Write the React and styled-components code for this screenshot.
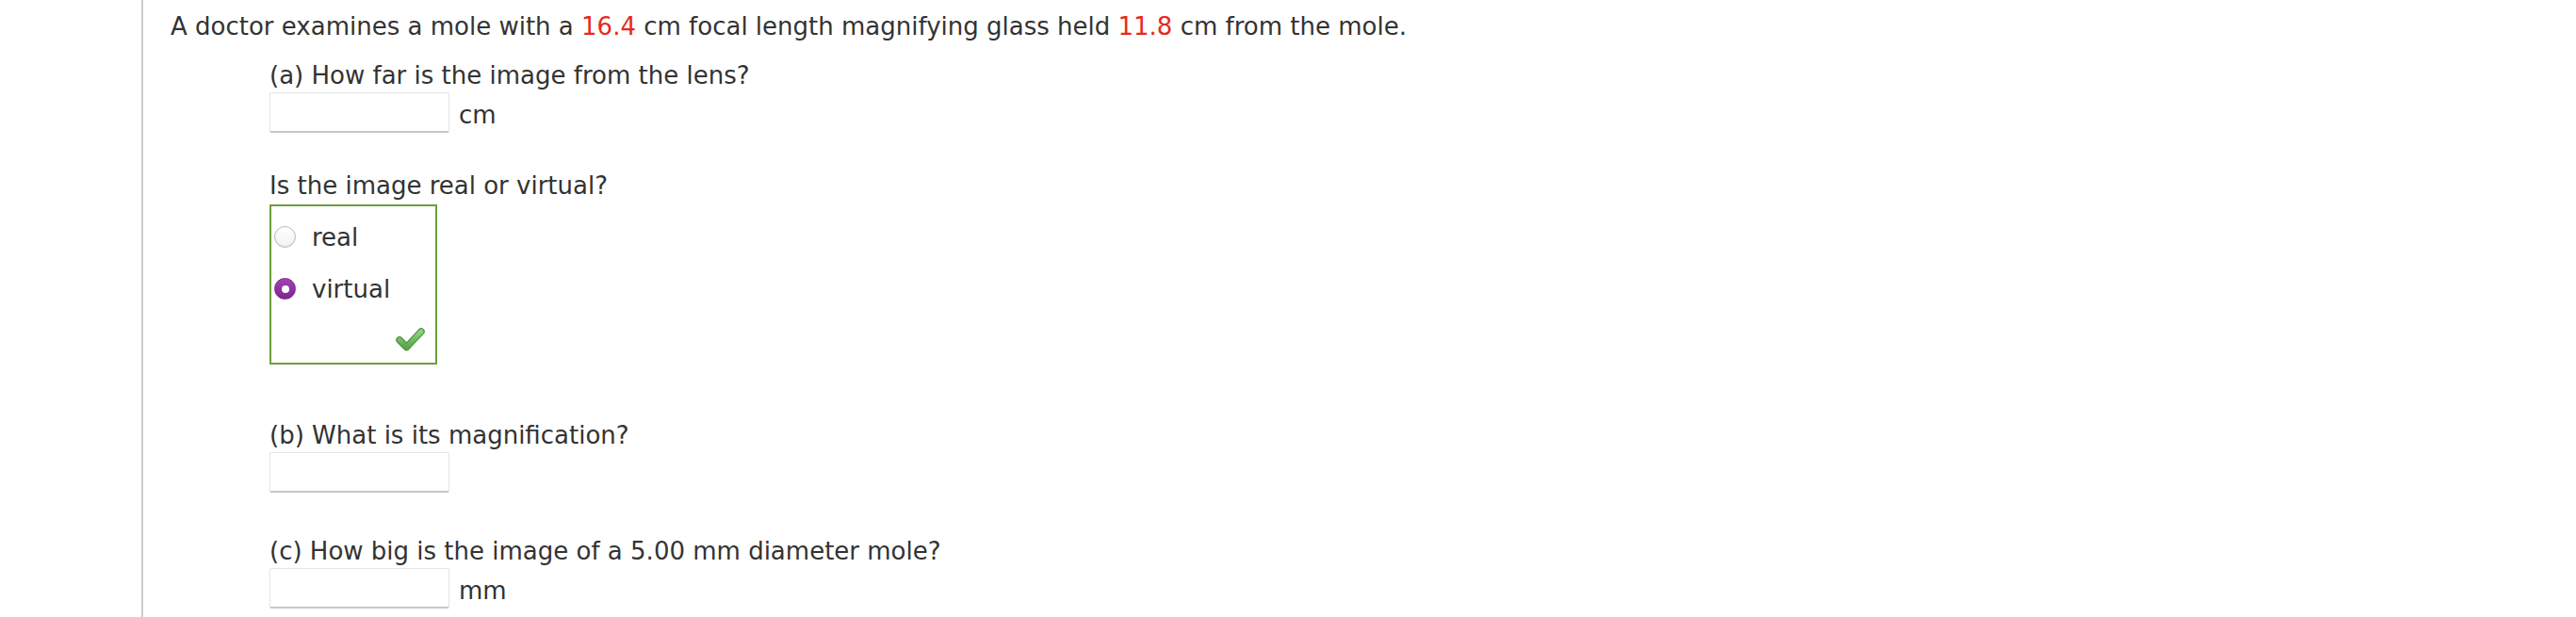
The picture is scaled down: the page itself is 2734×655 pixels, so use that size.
import React, { useState } from "react";
import styled, { createGlobalStyle } from "styled-components";

const GlobalStyle = createGlobalStyle`
  html, body {
    margin: 0;
    padding: 0;
    background: #ffffff;
  }
  body {
    font-family: "DejaVu Sans", Verdana, sans-serif;
    color: #333333;
  }
`;

const Page = styled.div`
  margin-left: 150px;
  min-height: 100vh;
  border-left: 2px solid #cccccc;
  padding: 10px 0 0 29px;
  box-sizing: border-box;
`;

const Question = styled.div`
  font-size: 26px;
  line-height: 36px;
`;

const Red = styled.span`
  color: #e8281e;
`;

const Part = styled.div`
  margin-left: 105px;
  margin-top: ${(p) => p.$top || 0}px;
`;

const Label = styled.div`
  font-size: 26px;
  line-height: 36px;
  white-space: nowrap;
`;

const AnswerRow = styled.div`
  display: flex;
  align-items: center;
  gap: 10px;
  font-size: 26px;
`;

const Field = styled.input`
  width: 191px;
  height: 43px;
  box-sizing: border-box;
  margin: 0;
  border: 1px solid #e4e4e4;
  border-bottom: 2px solid #c6c6c6;
  border-radius: 2px;
  background: #ffffff;
  font: inherit;
  padding: 0 8px;
  outline: none;
`;

const Unit = styled.span`
  font-size: 26px;
  line-height: 36px;
  padding-top: 4px;
`;

const ChoiceBox = styled.div`
  width: 178px;
  height: 170px;
  box-sizing: border-box;
  border: 2px solid #6b9f3f;
  padding-top: 5px;
  display: flex;
  flex-direction: column;
  margin-top: 2px;
`;

const Choice = styled.label`
  display: flex;
  align-items: center;
  height: 55px;
  padding-left: 3px;
  font-size: 26px;
  cursor: pointer;
`;

const Dot = styled.span`
  width: 23px;
  height: 23px;
  border-radius: 50%;
  box-sizing: border-box;
  flex-shrink: 0;
  margin-right: 17px;
  position: relative;
  border: 1px solid ${(p) => (p.$on ? "#7f2590" : "#b8b8b8")};
  box-shadow: ${(p) => (p.$on ? "none" : "inset 0 -1px 2px rgba(0,0,0,0.08)")};
  background: ${(p) =>
    p.$on
      ? "linear-gradient(#a244b3, #7e2490)"
      : "linear-gradient(#ffffff, #f3f3f3)"};

  &::after {
    content: "";
    display: ${(p) => (p.$on ? "block" : "none")};
    position: absolute;
    left: 50%;
    top: 50%;
    width: 8px;
    height: 8px;
    margin: -4px 0 0 -4px;
    border-radius: 50%;
    background: #ffffff;
  }
`;

const ChoiceText = styled.span`
  line-height: 36px;
`;

const Footer = styled.div`
  flex: 1;
  display: flex;
  justify-content: flex-end;
  align-items: center;
  padding-right: 11px;
`;

const Check = () => (
  <svg width="31" height="26" viewBox="0 0 31 26">
    <defs>
      <linearGradient id="chk" x1="0" y1="0" x2="0" y2="1">
        <stop offset="0" stopColor="#8fd07e" />
        <stop offset="1" stopColor="#5aa84b" />
      </linearGradient>
    </defs>
    <path
      d="M4 14 L11.5 21.5 L27 5"
      fill="none"
      stroke="#4f9440"
      strokeWidth="7.5"
      strokeLinecap="round"
      strokeLinejoin="round"
    />
    <path
      d="M4 14 L11.5 21.5 L27 5"
      fill="none"
      stroke="url(#chk)"
      strokeWidth="5"
      strokeLinecap="round"
      strokeLinejoin="round"
    />
  </svg>
);

const Answer = ({ unit }) => (
  <AnswerRow>
    <Field type="text" />
    {unit && <Unit>{unit}</Unit>}
  </AnswerRow>
);

export default function App() {
  const [pick, setPick] = useState("virtual");

  return (
    <Page>
      <GlobalStyle />
      <Question>
        A doctor examines a mole with a <Red>16.4</Red> cm focal length
        magnifying glass held <Red>11.8</Red> cm from the mole.
      </Question>

      <Part $top={16}>
        <Label>(a) How far is the image from the lens?</Label>
        <Answer unit="cm" />
      </Part>

      <Part $top={38}>
        <Label>Is the image real or virtual?</Label>
        <ChoiceBox>
          {["real", "virtual"].map((opt) => (
            <Choice key={opt} onClick={() => setPick(opt)}>
              <Dot $on={pick === opt} />
              <ChoiceText>{opt}</ChoiceText>
            </Choice>
          ))}
          <Footer>
            <Check />
          </Footer>
        </ChoiceBox>
      </Part>

      <Part $top={57}>
        <Label>(b) What is its magnification?</Label>
        <Answer />
      </Part>

      <Part $top={44}>
        <Label>(c) How big is the image of a 5.00 mm diameter mole?</Label>
        <Answer unit="mm" />
      </Part>
    </Page>
  );
}
